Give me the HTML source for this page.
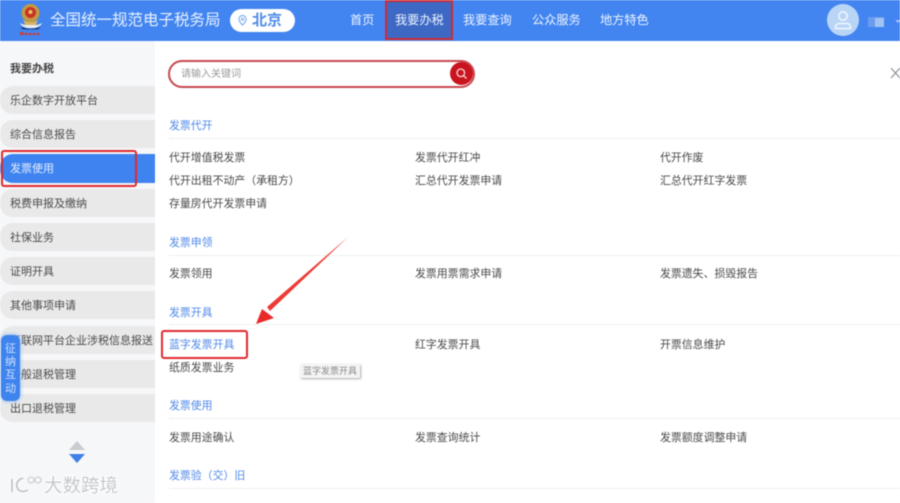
<!DOCTYPE html>
<html lang="zh-CN">
<head>
<meta charset="utf-8">
<title>全国统一规范电子税务局</title>
<style>
html,body{margin:0;padding:0;width:900px;height:503px;overflow:hidden;background:#fff}
body{position:relative;font-family:"Liberation Sans","Noto Sans CJK SC",sans-serif;color:#555}
#p{position:absolute;left:0;top:0;width:900px;height:503px;overflow:hidden;filter:blur(.5px)}
#p div{position:absolute;white-space:nowrap}
.hd{left:0;top:0;width:900px;height:41px;background:#4285f0}
.nav{top:12px;font-size:12.2px;line-height:16px;color:#eef4ff}
.side{left:0;top:41px;width:155px;height:462px;background:#f6f7f9}
.it{left:0;width:155px;height:28px;background:#e9e9ea;border-radius:13px 0 0 13px;font-size:11px;line-height:30px;color:#4a4a4a;text-indent:10px}
.t{font-size:10.9px;line-height:14px;color:#484848}
.h{font-size:10.9px;line-height:14px;color:#4f88e8;left:169px}
.ln{left:169px;width:731px;height:1px;background:#eff0f2}
</style>
</head>
<body>
<div id="p">
<div class="hd"></div>
<svg style="position:absolute;left:17px;top:3px" width="28" height="34" viewBox="0 0 28 34">
<path d="M3 20c1 3 4 4 7 5h8c3-1 6-2 7-5-2 1-4 2-6 2H9c-2 0-4-1-6-2z" fill="#e8eef5"/>
<circle cx="13.500" cy="10" r="9" fill="#c49a3e"/><circle cx="13.500" cy="9.500" r="5.500" fill="#c8322a"/><circle cx="13.500" cy="9" r="2" fill="#e8c45c"/>
<path d="M6 16c2 4 13 4 15 0l-2 6H8z" fill="#d8b560"/>
<path d="M3 24l10.500 2 10.500-2-3 2.500H6z" fill="#1f3f7a"/>
<rect x="3" y="29" width="3.500" height="3" fill="#d13a30"/><rect x="7.500" y="30" width="3" height="2" fill="#d13a30"/><rect x="11.500" y="30" width="3" height="2" fill="#d13a30"/><rect x="15.500" y="30" width="3" height="2" fill="#d13a30"/><rect x="19.500" y="30" width="3" height="2" fill="#d13a30"/>
</svg>
<div style="left:50px;top:11px;font-size:15.5px;line-height:20px;color:#e8f1ff">全国统一规范电子税务局</div>
<div style="left:230px;top:9px;width:65px;height:23px;background:#fff;border-radius:12px"></div>
<svg style="position:absolute;left:237px;top:14px" width="11" height="13" viewBox="0 0 11 13"><path d="M5.500 1.500a3.600 3.600 0 0 1 3.600 3.600c0 2.400-3.600 6-3.600 6s-3.600-3.600-3.600-6a3.600 3.600 0 0 1 3.600-3.600z" fill="none" stroke="#6a9ff0" stroke-width="1"/><circle cx="5.500" cy="5.200" r="1.200" fill="none" stroke="#6a9ff0" stroke-width=".8"/></svg>
<div style="left:252px;top:11px;font-size:15px;line-height:19px;color:#4f8bea;font-weight:bold">北京</div>
<div class="nav" style="left:350px">首页</div>
<div style="left:385px;top:0;width:68px;height:40px;background:#3d69c4;border:2px solid #cf2a35;box-sizing:border-box"></div>
<div class="nav" style="left:395px">我要办税</div>
<div class="nav" style="left:463px">我要查询</div>
<div class="nav" style="left:532px">公众服务</div>
<div class="nav" style="left:600px">地方特色</div>
<div style="left:827px;top:4px;width:32px;height:32px;border-radius:50%;background:#b9d5f6"></div>
<svg style="position:absolute;left:827px;top:4px" width="32" height="32" viewBox="0 0 32 32" fill="none" stroke="#f2f7fe" stroke-width="1.500"><circle cx="16" cy="12" r="4.200"/><path d="M8.500 24.500v-1.500c0-2.500 2-3.500 4-3.500h7c2 0 4 1 4 3.500v1.500z"/></svg>
<div style="left:868px;top:17px;width:16px;height:10px;background:#6b9cf0"></div>
<div style="left:875px;top:18px;width:9px;height:9px;background:#a3c3f4"></div>
<svg style="position:absolute;left:896px;top:19px" width="4" height="5" viewBox="0 0 4 5"><path d="M0 1l2 2 2-2" fill="none" stroke="#cfe0fa"/></svg>

<div class="side"></div>
<div style="left:10px;top:62px;font-size:11px;line-height:14px;font-weight:bold;color:#444">我要办税</div>
<div class="it" style="top:86px">乐企数字开放平台</div>
<div class="it" style="top:120px">综合信息报告</div>
<div class="it" style="top:154px;height:29px;background:#3f83f0;color:#e4efff">发票使用</div>
<div style="left:1px;top:150px;width:136px;height:37px;border:2px solid #df2a2e;border-radius:3px;box-sizing:border-box"></div>
<div class="it" style="top:189px">税费申报及缴纳</div>
<div class="it" style="top:223px">社保业务</div>
<div class="it" style="top:257px">证明开具</div>
<div class="it" style="top:291px">其他事项申请</div>
<div class="it" style="top:326px">互联网平台企业涉税信息报送</div>
<div class="it" style="top:360px">一般退税管理</div>
<div class="it" style="top:394px">出口退税管理</div>
<div style="left:1px;top:335px;width:19px;height:66px;background:#3f84ee;border-radius:6px;box-shadow:0 0 4px #7fb0f5"></div>
<div style="left:4px;top:343px;width:13px;font-size:11px;line-height:13.200px;color:#cfe2ff;white-space:normal;text-align:center">征<br>纳<br>互<br>动</div>
<svg style="position:absolute;left:68px;top:441px" width="18" height="22" viewBox="0 0 18 22"><path d="M9 0l8 9H1z" fill="#c8cbd0"/><path d="M1 13h16l-8 9z" fill="#3f7fe8"/></svg>
<svg style="position:absolute;left:8px;top:473px" width="36" height="24" viewBox="0 0 36 24" fill="none"><g stroke="#fff" stroke-width="4"><path d="M4 6v13M15 5C9 7 8 11 9 14c1 4 6 6 11 3"/></g><g stroke="#c4c8cd" stroke-width="2"><path d="M4 6v13M15 5C9 7 8 11 9 14c1 4 6 6 11 3"/></g><g stroke="#c4c8cd" stroke-width="1"><circle cx="23" cy="7" r="3"/><circle cx="30" cy="7" r="3"/></g></svg>
<div style="left:44px;top:475px;font-size:18.500px;line-height:22px;color:#c4c8cd;-webkit-text-stroke:2px #fff;paint-order:stroke fill">大数跨境</div>

<div style="left:168px;top:60px;width:307px;height:28px;border:2px solid #c8484f;border-radius:14px;box-sizing:border-box;background:#fff"></div>
<div style="left:181px;top:68px;font-size:10px;line-height:14px;color:#9a9a9a">请输入关键词</div>
<div style="left:450px;top:62px;width:23px;height:23px;border-radius:50%;background:#c9141f"></div>
<svg style="position:absolute;left:454px;top:66px" width="15" height="15" viewBox="0 0 15 15" fill="none" stroke="#f7d5d5" stroke-width="1.300"><circle cx="6.800" cy="6.800" r="3.800"/><path d="M9.700 9.700l2.800 2.800"/></svg>
<svg style="position:absolute;left:890px;top:67px" width="10" height="12" viewBox="0 0 10 12" fill="none" stroke="#8d939b" stroke-width="1.200"><path d="M1 1l9 10M10 1L1 11"/></svg>

<div class="h" style="top:119px">发票代开</div>
<div class="ln" style="top:138px"></div>
<div class="t" style="left:169px;top:151px">代开增值税发票</div>
<div class="t" style="left:415px;top:151px">发票代开红冲</div>
<div class="t" style="left:660px;top:151px">代开作废</div>
<div class="t" style="left:169px;top:174px">代开出租不动产（承租方）</div>
<div class="t" style="left:415px;top:174px">汇总代开发票申请</div>
<div class="t" style="left:660px;top:174px">汇总代开红字发票</div>
<div class="t" style="left:169px;top:197px">存量房代开发票申请</div>

<div class="h" style="top:236px">发票申领</div>
<div class="ln" style="top:255px"></div>
<div class="t" style="left:169px;top:267px">发票领用</div>
<div class="t" style="left:415px;top:267px">发票用票需求申请</div>
<div class="t" style="left:660px;top:267px">发票遗失、损毁报告</div>

<div class="h" style="top:306px">发票开具</div>
<div class="ln" style="top:324px"></div>
<div class="t" style="left:169px;top:338px;color:#4f88e6">蓝字发票开具</div>
<div style="left:161px;top:330px;width:87px;height:29px;border:2px solid #df2a2e;border-radius:3px;box-sizing:border-box"></div>
<div class="t" style="left:415px;top:338px">红字发票开具</div>
<div class="t" style="left:660px;top:338px">开票信息维护</div>
<div class="t" style="left:169px;top:361px">纸质发票业务</div>
<div style="left:300px;top:364px;width:60px;height:14px;background:#f4f4f4;box-shadow:1px 1px 2px #aaa;font-size:9px;line-height:14px;color:#888;text-align:center">蓝字发票开具</div>

<div class="h" style="top:399px">发票使用</div>
<div class="ln" style="top:418px"></div>
<div class="t" style="left:169px;top:431px">发票用途确认</div>
<div class="t" style="left:415px;top:431px">发票查询统计</div>
<div class="t" style="left:660px;top:431px">发票额度调整申请</div>

<div class="h" style="top:469px">发票验（交）旧</div>
<div class="ln" style="top:488px"></div>

<svg style="position:absolute;left:250px;top:232px" width="102" height="96" viewBox="0 0 102 96"><path d="M98 5L20 79l-3-4z" fill="#ee3a34"/><path d="M6 92l6-15 12 9z" fill="#ea2a28"/></svg>
</div>
</body>
</html>
